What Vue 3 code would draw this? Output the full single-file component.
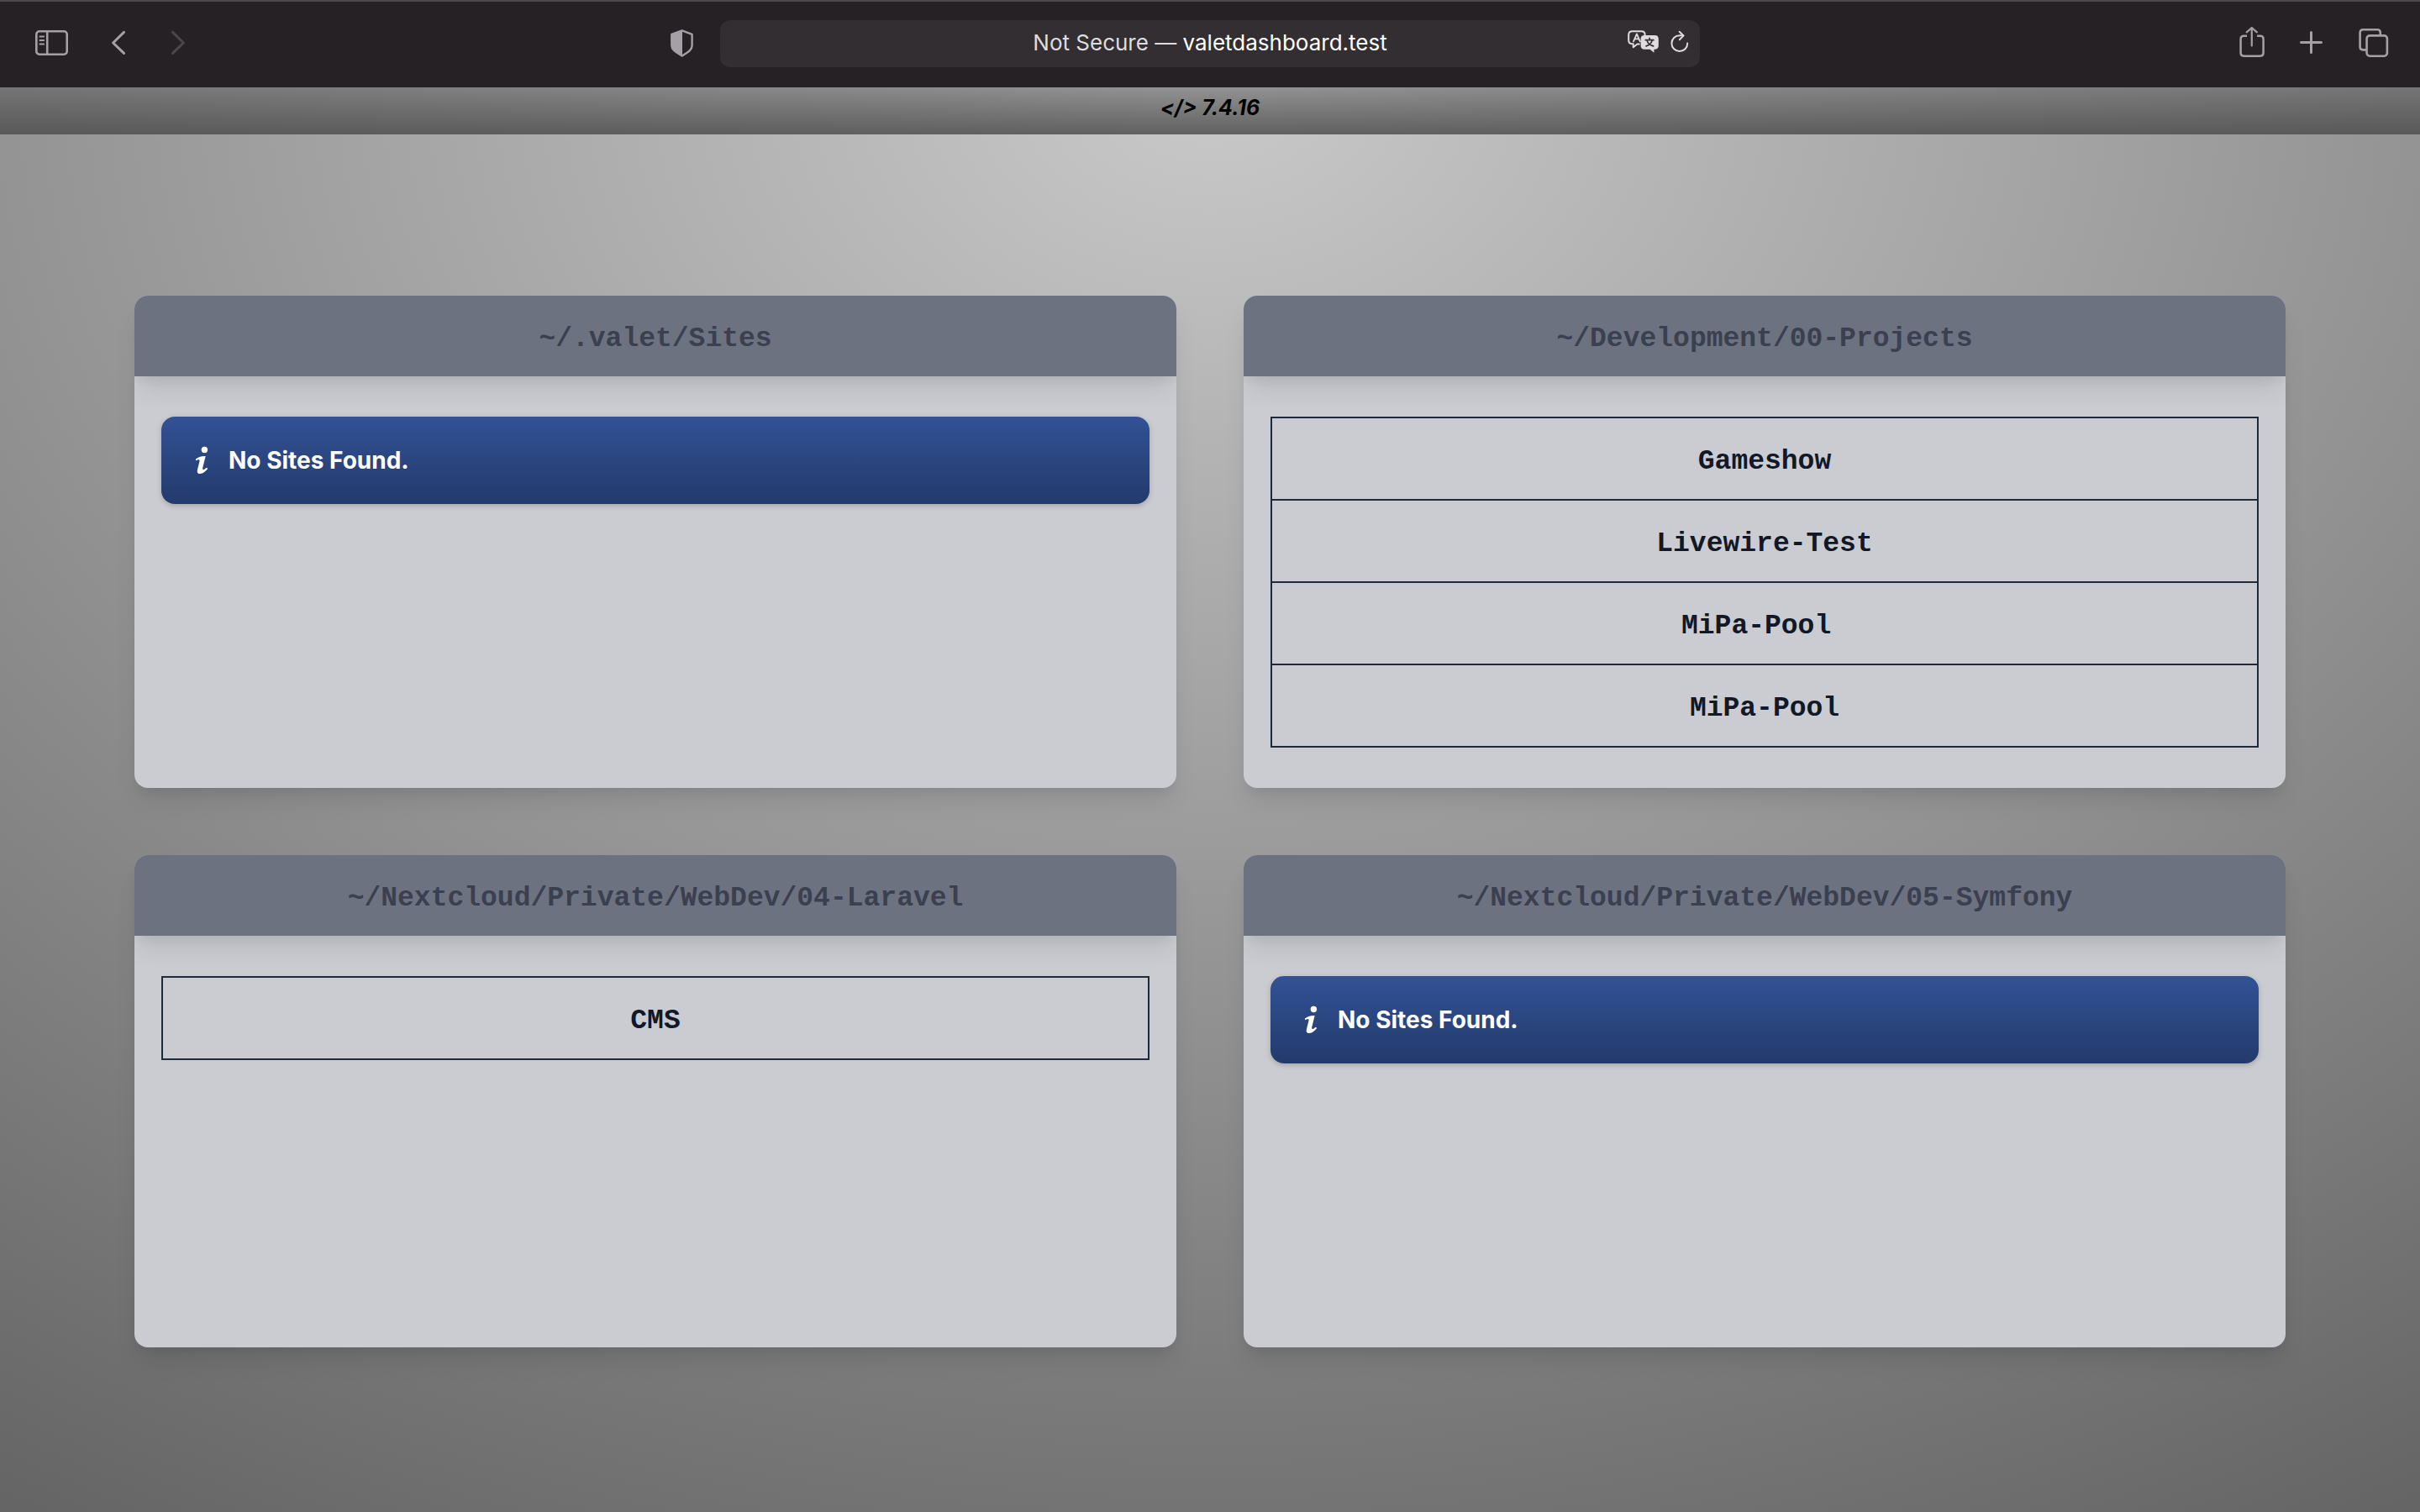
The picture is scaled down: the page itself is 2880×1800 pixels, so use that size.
<script setup>
const phpVersion = '7.4.16'

const folders = [
  { path: '~/.valet/Sites', sites: [] },
  { path: '~/Development/00-Projects', sites: ['Gameshow', 'Livewire-Test', 'MiPa-Pool\u00a0', 'MiPa-Pool'] },
  { path: '~/Nextcloud/Private/WebDev/04-Laravel', sites: ['CMS'] },
  { path: '~/Nextcloud/Private/WebDev/05-Symfony', sites: [] },
]
</script>

<template>
  <div class="window">
    <header class="toolbar">
      <div class="tools tools-left">
        <button type="button" aria-label="Show sidebar">
          <svg width="44" height="40" viewBox="0 0 44 40" fill="none" stroke="currentColor" stroke-width="2.6">
            <rect x="3.3" y="5.3" width="36.4" height="27.4" rx="3.6" />
            <path d="M16.2 5.5v27" />
            <path d="M7.5 11.5h4.6M7.5 16h4.6M7.5 20.4h4.6" stroke-width="2" stroke-linecap="round" />
          </svg>
        </button>
        <button type="button" aria-label="Back">
          <svg width="28" height="40" viewBox="0 0 28 40" fill="none" stroke="currentColor" stroke-width="3" stroke-linecap="round" stroke-linejoin="round">
            <path d="M19.5 6.4 6.6 19 19.5 31.4" />
          </svg>
        </button>
        <button type="button" class="dim" aria-label="Forward" disabled>
          <svg width="28" height="40" viewBox="0 0 28 40" fill="none" stroke="currentColor" stroke-width="3" stroke-linecap="round" stroke-linejoin="round">
            <path d="M5.5 6.4 18.4 19 5.5 31.4" />
          </svg>
        </button>
        <button type="button" class="shield" aria-label="Privacy report">
          <svg width="32" height="40" viewBox="0 0 32 40">
            <path d="M14.6 4.3 26.6 8.8v13.4c0 5.8-6.6 8.8-12 12.3C9.2 31 2.3 28 2.3 22.2V8.8Z" fill="none" stroke="currentColor" stroke-width="2.4" stroke-linejoin="round" />
            <path d="M15 4.3 2.3 8.8v13.400C2.300 28 9.200 31 15 34.500Z" fill="currentColor" />
          </svg>
        </button>
      </div>

      <div class="address">
        <button type="button" class="location">Not Secure — <span>valetdashboard.test</span></button>
        <div class="address-tools">
          <button type="button" aria-label="Translate">
            <svg width="42" height="40" viewBox="0 0 42 40" fill="none" stroke="currentColor">
              <path d="M16.6 20.5H13.500L8.700 24.200V20.200H7.600C5 20.200 3.200 18.700 3.200 16V9.400C3.200 6.700 5 5.200 7.600 5.200H18.500C21 5.200 22.600 6.700 22.600 9.200V10" stroke-width="2" stroke-linejoin="round" />
              <path d="M9 17.400 12.900 8.400 16.800 17.400M10.400 14.400h5" stroke-width="1.800" stroke-linecap="round" stroke-linejoin="round" />
              <path d="M22 10h12.400c2.800 0 4.400 1.600 4.400 4.200v8.300c0 2.600-1.600 4.200-4.400 4.200h-.9v4.100l-5-4.100H22c-2.800 0-4.400-1.600-4.400-4.200v-8.300C17.600 11.600 19.200 10 22 10Z" fill="currentColor" stroke="none" />
              <path d="M23.300 15.700h9.600M28.100 13.300v2.400M31.200 15.900c-.8 3.400-3.300 5.800-7.200 7M25 15.900c.8 3.400 3.600 5.900 7.600 7" class="cut" stroke-width="1.700" stroke-linecap="round" />
            </svg>
          </button>
          <button type="button" aria-label="Reload">
            <svg width="28" height="40" viewBox="0 0 28 40" fill="none" stroke="currentColor" stroke-width="2" stroke-linecap="round" stroke-linejoin="round">
              <path d="M23.200 19.500A9.400 9.400 0 1 1 13.800 10.200H18" />
              <path d="M13.700 5.800 18.600 10.400 13.800 15.300" />
            </svg>
          </button>
        </div>
      </div>

      <div class="tools tools-right">
        <button type="button" aria-label="Share">
          <svg width="34" height="40" viewBox="0 0 34 40" fill="none" stroke="currentColor" stroke-width="2.500" stroke-linecap="round" stroke-linejoin="round">
            <path d="M12 10.800H8.400c-2.300 0-3.800 1.400-3.800 3.600v16.700c0 2.300 1.500 3.600 3.800 3.600h19.400c2.300 0 3.800-1.300 3.800-3.600V14.400c0-2.200-1.500-3.600-3.800-3.600h-3.700" stroke-linecap="butt" />
            <path d="M17.800 22.500V1.500M11.700 6.300 17.800 1 23.900 6.300" stroke-width="2.200" />
          </svg>
        </button>
        <button type="button" aria-label="New tab">
          <svg width="32" height="40" viewBox="0 0 32 40" fill="none" stroke="currentColor" stroke-width="3" stroke-linecap="round">
            <path d="M4.500 18.500h24M16.500 6.500v24" />
          </svg>
        </button>
        <button type="button" aria-label="Tab overview">
          <svg width="40" height="40" viewBox="0 0 40 40" fill="none" stroke="currentColor" stroke-width="2.600">
            <rect x="12.600" y="10.400" width="24.300" height="24.300" rx="3.600" />
            <path d="M28.800 10V6.800c0-2.300-1.300-3.500-3.500-3.500H8.200C6 3.300 4.600 4.500 4.600 6.800v17c0 2.300 1.400 3.600 3.600 3.600h4" />
          </svg>
        </button>
      </div>
    </header>

    <main class="page">
      <div class="version">&lt;/&gt; {{ phpVersion }}</div>

      <div class="folders">
        <section v-for="folder in folders" :key="folder.path" class="card">
          <h2>{{ folder.path }}</h2>
          <div class="card-body">
            <ul v-if="folder.sites.length" class="sites">
              <li v-for="(site, index) in folder.sites" :key="index">
                <a href="#">{{ site }}</a>
              </li>
            </ul>
            <div v-else class="notice" role="status">
              <svg width="20" height="40" viewBox="0 0 20 40" fill="currentColor" aria-hidden="true">
                <circle cx="13.400" cy="7.500" r="3.700" />
                <path d="M2.800 18.600C5.500 16.400 9.300 14.900 13.200 14.900H14.700L11.300 28.600C10.900 30.300 11.200 31.300 12.200 31.100 13.400 30.800 14.800 29.300 16 28.700L17.300 30C14.600 33 11.300 36 8 36 5 36 4.300 33.800 5 30.900L7.500 20.900C7.800 19.400 7 18.900 5.700 19.300L3.200 20.300Z" />
              </svg>
              <span>No Sites Found.</span>
            </div>
          </div>
        </section>
      </div>
    </main>
  </div>
</template>

<style>
body {
  margin: 0;
}
</style>

<style scoped>
.window {
  display: flex;
  flex-direction: column;
  min-height: 100vh;
  font-family: Inter, "Liberation Sans", sans-serif;
}

button {
  display: flex;
  padding: 0;
  border: 0;
  background: none;
  color: inherit;
  font: inherit;
}

svg {
  display: block;
  flex: none;
}

.toolbar {
  display: grid;
  grid-template-columns: 1fr minmax(0, 1166px) 1fr;
  align-items: center;
  height: 104px;
  background: #262125;
  box-shadow: inset 0 2px #4b494c;
  color: #a5a0a5;
}

.tools {
  display: flex;
  align-items: center;
}

.tools-left {
  gap: 44px;
  padding: 0 28px 0 40px;
}

.tools-right {
  justify-content: flex-end;
  gap: 38px;
  padding-right: 36px;
}

.dim {
  color: #4b474b;
}

.shield {
  margin-left: auto;
}

.address {
  display: grid;
  grid-template-columns: 1fr auto 1fr;
  align-items: center;
  height: 56px;
  padding: 0 10px;
  border-radius: 12px;
  background: #332e32;
  color: #dedcde;
}

.location {
  grid-column: 2;
  font-size: 26px;
  line-height: 32px;
  padding-bottom: 2px;
  white-space: pre;
}

.location span {
  color: #fff;
}

.address-tools {
  display: flex;
  justify-content: flex-end;
  gap: 8px;
}

.cut {
  stroke: #332e32;
}

.page {
  flex: 1;
  background: radial-gradient(104% 130% at 50% 0, #c9c9c9, #5a5a5a);
}

.version {
  height: 56px;
  background: linear-gradient(rgba(77, 77, 77, 0.44), rgba(77, 77, 77, 0.84));
  color: #000;
  font-size: 25px;
  font-style: italic;
  font-weight: 700;
  line-height: 48px;
  text-align: center;
}

.folders {
  display: grid;
  grid-template-columns: repeat(2, minmax(0, 1fr));
  grid-auto-rows: 1fr;
  gap: 80px;
  padding: 192px 160px;
}

.card {
  overflow: hidden;
  border-radius: 16px;
  background: #cbccd1;
  box-shadow: 0 20px 30px -6px rgba(0, 0, 0, 0.1), 0 8px 12px -4px rgba(0, 0, 0, 0.05);
}

h2,
.sites a {
  padding-top: 8px;
  font-family: "Liberation Mono", monospace;
  font-size: 33px;
  font-weight: 700;
  line-height: 88px;
  text-align: center;
}

h2 {
  margin: 0;
  background: #6d7280;
  box-shadow: 0 20px 30px -6px rgba(0, 0, 0, 0.1), 0 8px 12px -4px rgba(0, 0, 0, 0.05);
  color: #3a4050;
}

.card-body {
  padding: 48px 32px;
}

.sites {
  margin: 0;
  padding: 0;
  border: 2px solid #1f2937;
  list-style: none;
}

.sites li + li {
  border-top: 2px solid #1f2937;
}

.sites a {
  display: block;
  color: #111827;
  text-decoration: none;
}

.notice {
  display: flex;
  align-items: center;
  gap: 22px;
  height: 104px;
  padding: 0 38px;
  border-radius: 16px;
  background: linear-gradient(#325296, #233a6b);
  box-shadow: 0 2px 6px rgba(0, 0, 0, 0.2);
  color: #fff;
  font-size: 28px;
  font-weight: 700;
}
</style>
